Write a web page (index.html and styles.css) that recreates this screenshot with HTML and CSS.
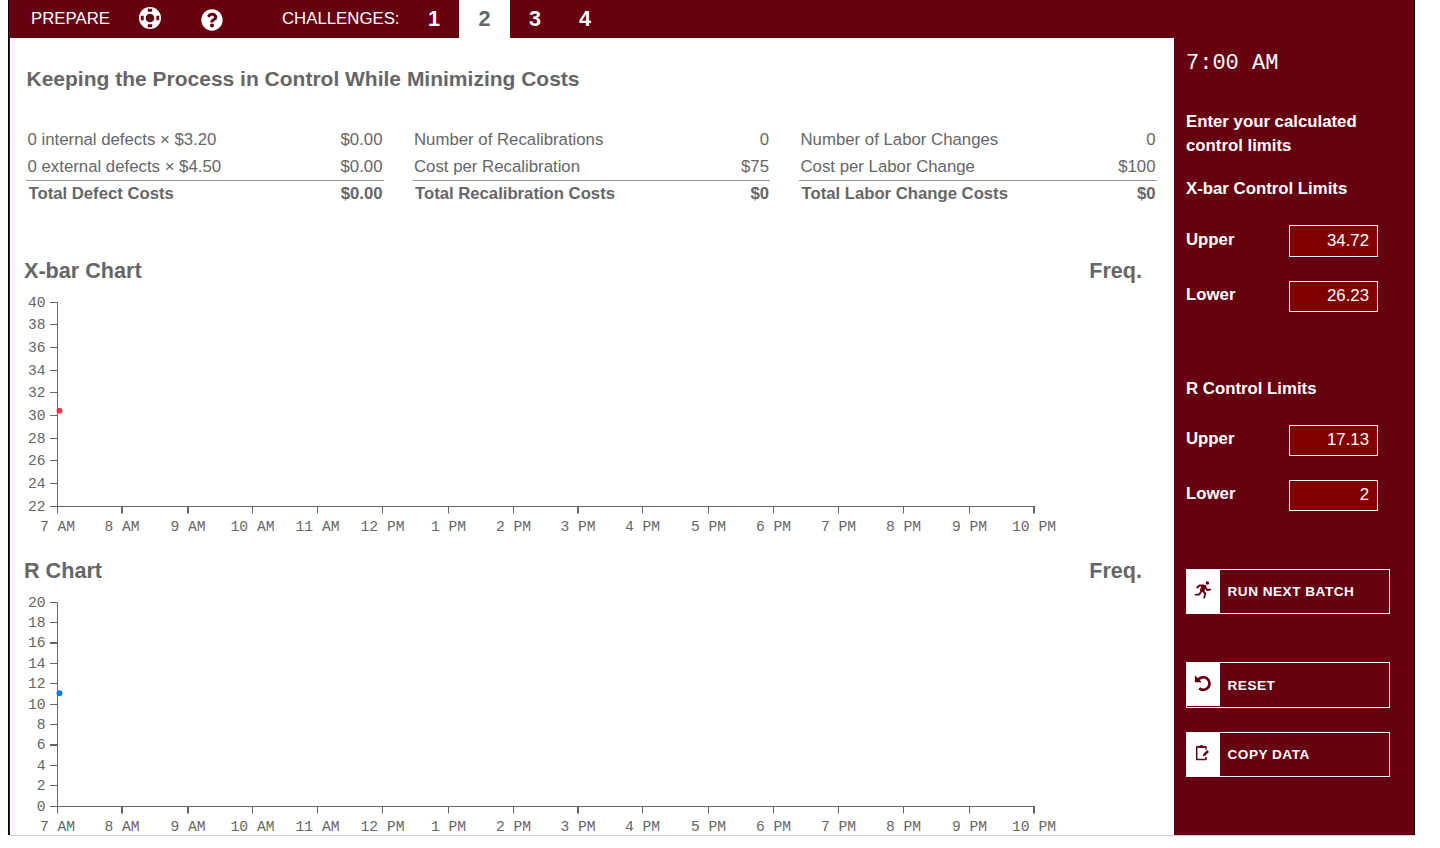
FILE: index.html
```html
<!DOCTYPE html>
<html lang="en">
<head>
    <meta charset="UTF-8">
    <meta name="viewport" content="width=device-width, initial-scale=1.0">
    <title>Process Control</title>
    <link rel="stylesheet" href="styles.css">
</head>
<body>
    <div class="app">
        <div class="left">
            <nav class="topbar">
                <span class="nav-label">PREPARE</span>
                <a class="nav-icon ring">
                    <svg viewBox="0 0 22 22" width="22" height="22">
                        <circle cx="11" cy="11" r="11" fill="#fff"/>
                        <circle cx="11" cy="11" r="4.3" fill="#660011"/>
                        <path d="M8.800 1.800h4.400v2.900h-4.400zM8.800 17.300h4.400v2.900h-4.400zM1.800 8.800v4.400h2.900v-4.400zM17.300 8.800v4.400h2.900v-4.400z" fill="#660011"/>
                    </svg>
                </a>
                <a class="nav-icon help">
                    <svg viewBox="0 0 512 512" width="22" height="22">
                        <path fill="#fff" d="M504 256c0 137-111 248-248 248S8 393 8 256 119 8 256 8s248 111 248 248zM262.700 90c-54.500 0-89.300 23-116.500 63.800-3.500 5.300-2.400 12.400 2.700 16.300l34.700 26.300c5.200 3.900 12.600 3 16.700-2.100 17.900-22.700 30.100-35.800 57.300-35.800 20.400 0 45.700 13.100 45.700 33 0 15-12.400 22.700-32.500 34C247.100 238.500 216 254.900 216 296v4c0 6.600 5.400 12 12 12h56c6.600 0 12-5.400 12-12v-1.300c0-28.500 83.200-29.600 83.200-106.700 0-58-60.200-102-116.500-102zM256 338c-25.400 0-46 20.600-46 46s20.600 46 46 46 46-20.600 46-46-20.600-46-46-46z"/>
                    </svg>
                </a>
                <span class="nav-label challenges">CHALLENGES:</span>
                <a class="tab">1</a>
                <a class="tab active">2</a>
                <a class="tab">3</a>
                <a class="tab">4</a>
            </nav>

            <main class="content">
                <h1>Keeping the Process in Control While Minimizing Costs</h1>

                <div class="costs">
                    <div class="cost-table">
                        <div class="cost-row"><span>0 internal defects × $3.20</span><span>$0.00</span></div>
                        <div class="cost-row"><span>0 external defects × $4.50</span><span>$0.00</span></div>
                        <div class="cost-row total"><span>Total Defect Costs</span><span>$0.00</span></div>
                    </div>
                    <div class="cost-table">
                        <div class="cost-row"><span>Number of Recalibrations</span><span>0</span></div>
                        <div class="cost-row"><span>Cost per Recalibration</span><span>$75</span></div>
                        <div class="cost-row total"><span>Total Recalibration Costs</span><span>$0</span></div>
                    </div>
                    <div class="cost-table">
                        <div class="cost-row"><span>Number of Labor Changes</span><span>0</span></div>
                        <div class="cost-row"><span>Cost per Labor Change</span><span>$100</span></div>
                        <div class="cost-row total"><span>Total Labor Change Costs</span><span>$0</span></div>
                    </div>
                </div>

                <section class="chart">
                    <div class="chart-head"><h2>X-bar Chart</h2><h2>Freq.</h2></div>
                    <svg id="xbar" class="plot" width="1164" height="250"></svg>
                </section>
                <section class="chart">
                    <div class="chart-head"><h2>R Chart</h2><h2>Freq.</h2></div>
                    <svg id="range" class="plot" width="1164" height="250"></svg>
                </section>
            </main>
        </div>

        <aside class="sidebar">
            <div class="clock">7:00 AM</div>
            <p class="prompt">Enter your calculated control limits</p>

            <h3>X-bar Control Limits</h3>
            <div class="limit tall">
                <label for="xupper">Upper</label>
                <input type="text" id="xupper" value="34.72">
            </div>
            <div class="limit">
                <label for="xlower">Lower</label>
                <input type="text" id="xlower" value="26.23">
            </div>

            <h3 class="range-title">R Control Limits</h3>
            <div class="limit">
                <label for="rupper">Upper</label>
                <input type="text" id="rupper" value="17.13">
            </div>
            <div class="limit">
                <label for="rlower">Lower</label>
                <input type="text" id="rlower" value="2">
            </div>

            <button class="action run">
                <span class="action-icon">
                    <svg viewBox="0 0 18 18" width="18" height="18">
                        <circle cx="13.400" cy="2" r="1.800" fill="#660011"/>
                        <path d="M3.200 6.500L5.500 4.400L10.300 4.700M7 10.800L5.200 13.600H1.700M8.600 9.800L11.300 12.500L10.300 16.500M11 5.800L13.200 9L16.300 8.600" fill="none" stroke="#660011" stroke-width="1.900" stroke-linejoin="round" stroke-linecap="round"/>
                        <path d="M8.200 4L12 4.800L9.700 10.800L6.300 9.600z" fill="#660011" stroke="#660011" stroke-linejoin="round"/>
                    </svg>
                </span>
                RUN NEXT BATCH
            </button>
            <button class="action reset">
                <span class="action-icon">
                    <svg viewBox="0 0 18 18" width="18" height="18">
                        <path d="M4 6A6.300 6.300 0 1 1 5.200 14.400" fill="none" stroke="#660011" stroke-width="2.700"/>
                        <path d="M.9 1.300L7.800 8.300H.9z" fill="#660011"/>
                    </svg>
                </span>
                RESET
            </button>
            <button class="action copy">
                <span class="action-icon">
                    <svg viewBox="0 0 18 18" width="18" height="18">
                        <path d="M12 5.500V2.700H2.700V15.500H12V13" fill="none" stroke="#660011" stroke-width="1.500" stroke-linejoin="round"/>
                        <path d="M4.200 1.800H5.800Q7.400 0 9 1.800H10.600V4H4.200zM8.900 12.300L9.300 10L13.200 6.100L15 7.900L11.100 11.800z" fill="#660011"/>
                    </svg>
                </span>
                COPY DATA
            </button>
        </aside>
    </div>
    <div class="bottom-line"></div>

    <script>
        // x position of each hour tick, whole numbers are drawn two pixels wide
        var hours = [
            ["7 AM", 47.5], ["8 AM", 112], ["9 AM", 178], ["10 AM", 242.5],
            ["11 AM", 307.5], ["12 PM", 372.5], ["1 PM", 438.5], ["2 PM", 503.5],
            ["3 PM", 568], ["4 PM", 632.5], ["5 PM", 698.5], ["6 PM", 763.5],
            ["7 PM", 828.5], ["8 PM", 893.5], ["9 PM", 959.5], ["10 PM", 1024]
        ];

        // Draws both axes and the first sample
        function drawChart(id, min, max, value, color, wideTicks) {
            var left = 47.5, right = 1024.5, top = 17.5, bottom = 221.5;
            var out = `<path class="axis" d="M${left} ${top}V${bottom}H${right}"/>`;

            for (var v = min; v <= max; v += 2) {
                var y = Math.floor(17 + (max - v) / (max - min) * 204 + 0.001) + 0.5;
                var wide = wideTicks.includes(v);
                out += `<path class="axis${wide ? " wide" : ""}" d="M${left - 7.5} ${wide ? y + 0.5 : y}H${left}"/>`;
                out += `<text x="35.5" y="${y + 4.5}" text-anchor="end">${v}</text>`;
            }

            for (var [label, x] of hours) {
                out += `<path class="axis${x % 1 ? "" : " wide"}" d="M${x} ${bottom - 0.5}V${bottom + 7}"/>`;
                out += `<text x="${x}" y="${bottom + 24.5}" text-anchor="middle">${label}</text>`;
            }

            var cy = bottom - (value - min) / (max - min) * (bottom - top);
            out += `<circle cx="49.5" cy="${cy}" r="3" fill="${color}"/>`;
            document.getElementById(id).innerHTML = out;
        }

        drawChart("xbar", 22, 40, 30.45, "#ff3344", []);
        drawChart("range", 0, 20, 11.1, "#0080ff", [6, 16]);
    </script>
</body>
</html>
```
FILE: styles.css
```css
body {
    margin: 0;
    font-family: "Liberation Sans", Arial, sans-serif;
    font-size: 16.8px;
    color: #666;
    background-color: #fff;
    overflow: hidden;
}

h1, h2, h3, p {
    margin: 0;
}

.app {
    display: flex;
    box-sizing: border-box;
    width: 1407px;
    height: 835px;
    margin-left: 8px;
    border-left: 1px solid #000;
    border-right: 1px solid #000;
    background-color: #660011;
    overflow: hidden;
}

.left {
    width: 1164px;
    padding-left: 1px;
}

.bottom-line {
    width: 1404px;
    height: 1px;
    margin-left: 10px;
    background-color: #ccc;
}

/* Top navigation */
.topbar {
    display: flex;
    height: 38px;
    line-height: 37px;
    padding-left: 21px;
    color: #fff;
}

.nav-label {
    width: 108px;
}

.nav-icon {
    width: 61.5px;
    line-height: 0;
}

.ring {
    padding-top: 7px;
}

.help {
    width: 81.5px;
    padding-top: 9px;
}

.challenges {
    width: 127px;
}

.tab {
    width: 50px;
    font-size: 21.6px;
    font-weight: bold;
    text-align: center;
}

.tab.active {
    width: 51px;
    color: #666;
    background-color: #fff;
}

/* Main content */
.content {
    height: 797px;
    background-color: #fff;
    overflow: hidden;
}

h1 {
    padding: 27px 0 0 16.5px;
    font-size: 21px;
    line-height: 28px;
}

.costs {
    display: flex;
    gap: 29px;
    padding: 33px 0 0 16px;
}

.cost-table {
    width: 357.5px;
}

.cost-row {
    display: flex;
    justify-content: space-between;
    height: 27px;
    line-height: 27px;
    padding: 0 1px 0 1.5px;
}

.cost-row.total {
    box-sizing: border-box;
    border-top: 1px solid #999;
    line-height: 26px;
    padding-left: 2.5px;
    font-size: 16.7px;
    font-weight: bold;
}

.chart {
    height: 300px;
}

.costs + .chart {
    margin-top: 48px;
}

.chart-head {
    display: flex;
    justify-content: space-between;
    box-sizing: border-box;
    height: 30px;
    line-height: 30px;
    padding: 1px 32px 0 14px;
}

h2 {
    font-size: 21.6px;
}

.plot {
    display: block;
}

.plot text {
    font-family: "Liberation Mono", monospace;
    font-size: 14.65px;
    fill: #666;
}

.axis {
    fill: none;
    stroke: #666;
}

.axis.wide {
    stroke-width: 2px;
}

/* Sidebar */
.sidebar {
    display: flex;
    flex-direction: column;
    width: 204px;
    padding-left: 12px;
    padding-top: 51px;
    color: #fff;
}

.clock {
    height: 26px;
    line-height: 26px;
    margin-bottom: 33px;
    font-family: "Liberation Mono", monospace;
    font-size: 22px;
}

.prompt, h3 {
    font-size: 16.8px;
    line-height: 24px;
    font-weight: bold;
}

.prompt {
    margin-bottom: 19px;
}

h3 {
    margin-bottom: 24px;
}

.range-title {
    margin-top: 41px;
}

.limit {
    display: flex;
    justify-content: space-between;
    width: 192px;
    height: 31px;
    line-height: 27px;
    margin-bottom: 24px;
    font-weight: bold;
}

.limit.tall {
    height: 32px;
    line-height: 29px;
}

.limit input {
    box-sizing: border-box;
    width: 89px;
    padding: 0 8px 2px 0;
    border: 1px solid #fff;
    background-color: #800000;
    color: #fff;
    font-family: inherit;
    font-size: 16.8px;
    text-align: right;
}

.limit.tall input {
    padding-bottom: 1px;
}

.action {
    display: flex;
    align-items: center;
    box-sizing: border-box;
    width: 204px;
    height: 45px;
    padding: 0;
    border: 1px solid #fff;
    background-color: #660011;
    color: #fff;
    font-family: inherit;
    font-size: 13.6px;
    font-weight: bold;
    letter-spacing: 0.5px;
}

.action-icon {
    display: flex;
    align-items: center;
    justify-content: center;
    box-sizing: border-box;
    width: 33px;
    height: 43px;
    padding-bottom: 3px;
    padding-right: 1px;
    margin-right: 7.5px;
    background-color: #fff;
}

.run {
    margin-top: 34px;
}

.reset {
    height: 46px;
    margin-top: 48px;
}

.reset .action-icon {
    align-self: flex-start;
    padding-bottom: 4px;
}

.copy {
    margin-top: 24px;
}

.copy .action-icon {
    padding-bottom: 4px;
}
```
